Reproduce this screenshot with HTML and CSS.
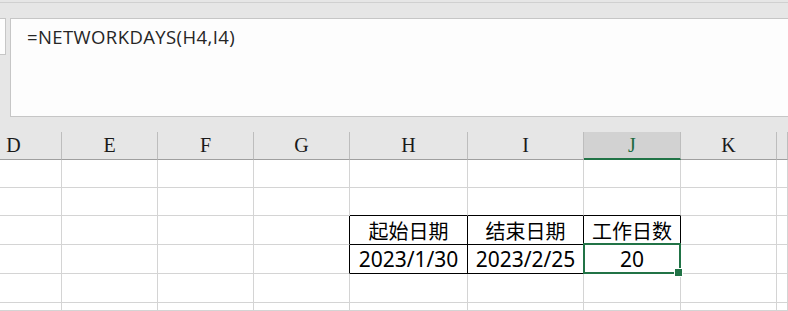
FILE: index.html
```html
<!DOCTYPE html>
<html lang="zh-CN">

<head>
    <meta charset="UTF-8">
    <meta name="viewport" content="width=device-width, initial-scale=1.0">
    <title>NETWORKDAYS</title>
    <link rel="stylesheet" href="styles.css">
</head>

<body>
    <div class="formula-bar">
        <div class="name-box"></div>
        <div class="formula-box">=NETWORKDAYS(H4,I4)</div>
    </div>

    <div class="sheet">
        <!-- column headers -->
        <div class="col-head">D</div>
        <div class="col-head">E</div>
        <div class="col-head">F</div>
        <div class="col-head">G</div>
        <div class="col-head">H</div>
        <div class="col-head">I</div>
        <div class="col-head active">J</div>
        <div class="col-head">K</div>
        <div class="col-head"></div>

        <!-- row 1 -->
        <div class="cell"></div><div class="cell"></div><div class="cell"></div><div class="cell"></div>
        <div class="cell"></div><div class="cell"></div><div class="cell"></div><div class="cell"></div><div class="cell"></div>

        <!-- row 2 -->
        <div class="cell"></div><div class="cell"></div><div class="cell"></div><div class="cell"></div>
        <div class="cell edge-b"></div><div class="cell edge-b"></div><div class="cell edge-b"></div><div class="cell"></div><div class="cell"></div>

        <!-- row 3 -->
        <div class="cell"></div><div class="cell"></div><div class="cell"></div><div class="cell edge-r"></div>
        <div class="cell boxed">起始日期</div><div class="cell boxed">结束日期</div><div class="cell boxed">工作日数</div><div class="cell"></div><div class="cell"></div>

        <!-- row 4 -->
        <div class="cell"></div><div class="cell"></div><div class="cell"></div><div class="cell edge-r"></div>
        <div class="cell boxed num">2023/1/30</div><div class="cell boxed num">2023/2/25</div><div class="cell boxed num selected">20</div><div class="cell"></div><div class="cell"></div>

        <!-- row 5 -->
        <div class="cell"></div><div class="cell"></div><div class="cell"></div><div class="cell"></div>
        <div class="cell"></div><div class="cell"></div><div class="cell"></div><div class="cell"></div><div class="cell"></div>

        <!-- row 6 -->
        <div class="cell"></div><div class="cell"></div><div class="cell"></div><div class="cell"></div>
        <div class="cell"></div><div class="cell"></div><div class="cell"></div><div class="cell"></div><div class="cell"></div>
    </div>
</body>

</html>
```

FILE: styles.css
```css
* {
    box-sizing: border-box;
}

body {
    margin: 0;
    width: 788px;
    height: 311px;
    overflow: hidden;
    background: #e6e6e6;
    font-family: 'Noto Sans', 'Noto Sans CJK SC', sans-serif;
    color: #000;
}

.formula-bar {
    display: flex;
    gap: 4px;
    margin-top: 2px;
    border-top: 1px solid #d0d0d0;
    padding-top: 15px;
    height: 130px;
}

.name-box {
    width: 6px;
    height: 37px;
    background: #fdfdfd;
    border: 1px solid #c6c6c6;
    border-left: none;
}

.formula-box {
    flex: 1;
    height: 99px;
    background: #fdfdfd;
    border: 1px solid #c6c6c6;
    border-right: none;
    padding: 5px 0 0 16px;
    font-family: 'Open Sans', 'Noto Sans', sans-serif;
    font-size: 18.5px;
    letter-spacing: 0.4px;
    color: #262626;
}

.sheet {
    display: grid;
    grid-template-columns: 96px 96px 96px 96px 118px 116px 97px 96px 11px;
    grid-template-rows: 28px 28px 28px 29px 29px 29px 8px;
    margin-left: -34px;
    background: #fff;
}

.col-head {
    display: flex;
    align-items: center;
    justify-content: center;
    background: #e6e6e6;
    border-right: 1px solid #bdbdbd;
    border-bottom: 1px solid #9f9f9f;
    font-family: 'Liberation Serif', serif;
    font-size: 20px;
    color: #1a1a1a;
}

.col-head.active {
    background: #d2d2d2;
    border-bottom: 2px solid #217346;
    color: #1d6a3e;
    padding-top: 1px;
}

.cell {
    display: flex;
    align-items: center;
    justify-content: center;
    border-right: 1px solid #d4d4d4;
    border-bottom: 1px solid #d4d4d4;
    font-size: 20px;
}

.num {
    font-size: 21px;
}

.edge-b {
    border-bottom-color: #000;
}

.edge-r {
    border-right-color: #000;
}

.boxed {
    border-color: #000;
}

.selected {
    position: relative;
}

.selected::after {
    content: '';
    position: absolute;
    left: -1px;
    top: -2px;
    right: -1px;
    bottom: -1px;
    border: 2px solid #217346;
}

.selected::before {
    content: '';
    position: absolute;
    right: -3px;
    bottom: -4px;
    width: 7px;
    height: 7px;
    background: #217346;
    border: 1px solid #fff;
    z-index: 1;
}
```
